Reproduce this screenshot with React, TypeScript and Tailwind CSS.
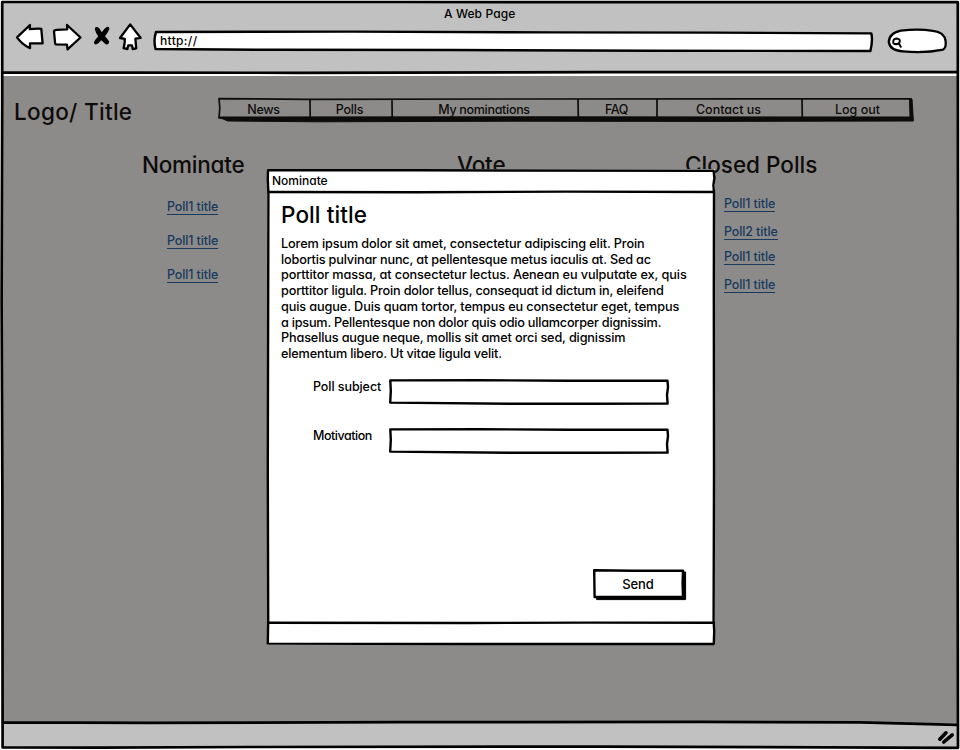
import type { ReactNode } from "react";

const FONT =
  "font-['Inter','Liberation_Sans',sans-serif] [font-feature-settings:'cv11','calt'_0]";

/* Hand-drawn outline stretched over the box that contains it. */
function Outline({
  w,
  h,
  d,
  stroke = 2.4,
  fill = "none",
  color = "#000",
}: {
  w: number;
  h: number;
  d: string;
  stroke?: number;
  fill?: string;
  color?: string;
}) {
  return (
    <svg
      className="pointer-events-none absolute inset-0 overflow-visible"
      width={w}
      height={h}
      viewBox={`0 0 ${w} ${h}`}
      fill={fill}
      stroke={color}
      strokeWidth={stroke}
      strokeLinejoin="round"
      strokeLinecap="round"
    >
      <path d={d} />
    </svg>
  );
}

function BrowserIcons() {
  return (
    <svg
      className="ml-[12px] mt-[18px] h-[32px] w-[130px] shrink-0"
      viewBox="14 20 130 32"
      fill="#fff"
      stroke="#000"
      strokeWidth="2.3"
      strokeLinejoin="round"
      strokeLinecap="round"
    >
      <path d="M17 37.4L30 25L29.8 29.2Q36 28.4 41.3 28.8L42.6 43.4L30 43.4L30 48.2Q22 44.5 17 37.4Z" />
      <path d="M54 31.5Q54.2 29.8 56.5 29.8L67.2 29.4L67 25L80.5 37.5L67.5 49.4L67 44.6L56.2 44.4Q55 44.2 55 42Z" />
      <path
        d="M95.4 27.2Q97.6 26.4 99.4 28.4L101.8 32.2Q104.4 28.4 107 26.8Q109.6 26.4 109.4 29.2Q107.6 32.8 105 36.2Q107.4 38.8 109.2 41.4Q109 44.6 106 44.4Q103.6 42.4 101.2 40.2Q98.6 43.6 96 44.6Q93.4 44.4 94.2 41.6Q95.6 38.8 98.2 36.4Q95.6 32.6 94.8 29.2Z"
        fill="#000"
        stroke="none"
      />
      <path d="M130.2 24.4L120 38L124.8 38.8Q125 44 123.6 48.2L127.4 49L128.2 45.4L132 45.4L132.7 49L136.2 48.4L135.4 38.6L140.6 37.8Q135.5 31.5 130.2 24.4Z" />
    </svg>
  );
}

const navItems = [
  { label: "News", cell: "w-[91px]", track: "tracking-[-0.3px]" },
  { label: "Polls", cell: "w-[81px]", track: "tracking-[-0.2px]" },
  { label: "My nominations", cell: "w-[188px]", track: "tracking-[-0.3px]" },
  { label: "FAQ", cell: "w-[77px]", track: "tracking-[-0.4px]" },
  { label: "Contact us", cell: "w-[147px]", track: "tracking-[0px]" },
  { label: "Log out", cell: "w-[111px]", track: "tracking-[0px]" },
];

function PollLink({ children, className = "" }: { children: ReactNode; className?: string }) {
  return (
    <a
      className={`block h-[15px] w-fit whitespace-pre border-b border-[#173a5e] text-[12.5px] leading-[14px] tracking-[-0.12px] text-[#173a5e] ${className}`}
    >
      {children}
    </a>
  );
}

const lines = [
  { text: "Lorem ipsum dolor sit amet, consectetur adipiscing elit. Proin", track: "tracking-[-0.12px]" },
  { text: "lobortis pulvinar nunc, at pellentesque metus iaculis at. Sed ac", track: "tracking-[-0.18px]" },
  { text: "porttitor massa, at consectetur lectus. Aenean eu vulputate ex, quis", track: "tracking-[-0.09px]" },
  { text: "porttitor ligula. Proin dolor tellus, consequat id dictum in, eleifend", track: "tracking-[-0.18px]" },
  { text: "quis augue. Duis quam tortor, tempus eu consectetur eget, tempus", track: "tracking-[-0.11px]" },
  { text: "a ipsum. Pellentesque non dolor quis odio ullamcorper dignissim.", track: "tracking-[-0.23px]" },
  { text: "Phasellus augue neque, mollis sit amet orci sed, dignissim", track: "tracking-[-0.15px]" },
  { text: "elementum libero. Ut vitae ligula velit.", track: "tracking-[-0.18px]" },
];

function Field({ label, className, track }: { label: string; className: string; track: string }) {
  return (
    <div className={`flex pl-[46px] ${className}`}>
      <label className={`w-[76px] whitespace-nowrap text-[12.5px] leading-[16px] ${track}`}>{label}</label>
      <div className="relative h-[26px] w-[280px]">
        <Outline w={280} h={26} d="M1.3 1.4L90 1.2L180 1.8L278.5 1.8L279 8L278 16L278.6 24.6L200 24.8L120 24.8L1.2 23.6L1.8 12Z" />
      </div>
    </div>
  );
}

function Dialog() {
  return (
    <div className="absolute left-[267px] top-[169px] flex h-[476px] w-[448px] flex-col bg-white text-black">
      <Outline
        w={448}
        h={476}
        d="M1 1.3L150 1.2L250 1.5L446.6 1.7L447.4 9L446.4 16L447 24L446.8 120L447 300L446.6 452L447.2 462L446.8 475L200 475L.8 474.6L1.2 452L.8 300L1.2 120L1.4 24L.8 10Z"
      />
      <div className="relative h-[23px] pl-[5px] pt-[4px]">
        <h2 className="text-[12px] leading-[16px] tracking-[0px]">Nominate</h2>
        <Outline w={448} h={23} d="M1.2 23L150 23.2L300 22.6L447 23" />
      </div>
      <div className="h-[430px] pl-[14px]">
        <h3 className="mt-[9px] whitespace-pre text-[22.5px] leading-[28px] tracking-[0.1px]">Poll title</h3>
        <div className="mt-[7px] text-[12.7px] leading-[15.7px]">
          {lines.map((l) => (
            <p key={l.text} className={`whitespace-nowrap ${l.track}`}>
              {l.text}
            </p>
          ))}
        </div>
        <div className="-ml-[14px]">
          <Field label="Poll subject" className="mt-[17.4px]" track="tracking-[-0.07px]" />
          <Field label="Motivation" className="mt-[23px]" track="tracking-[-0.46px]" />
        </div>
        <button className="relative ml-[312px] mt-[115px] flex h-[32px] w-[93px] pt-[7px]">
          <Outline w={93} h={32} fill="#000" stroke={1} d="M4 28L90 28L90 3L92.6 3L92.6 30.6L4 30.6Z" />
          <Outline w={93} h={32} d="M1.2 1.3L40 1.8L90 1.6L89.6 14L90 27.7L40 28L1.6 28Z" />
          <span className="w-[90px] text-center text-[13px] leading-[16px] tracking-[-0.1px]">Send</span>
        </button>
      </div>
      <div className="relative h-[23px]">
        <Outline w={448} h={23} d="M1.2 .8L200 1L320 .6L447 .8" />
      </div>
    </div>
  );
}

const HEADING = "mt-px whitespace-nowrap text-[22.5px] leading-[26px]";

export default function App() {
  return (
    <div className={`relative flex h-[750px] w-[960px] flex-col overflow-hidden bg-white font-[450] text-black ${FONT}`}>
      <header className="mx-[2px] mt-[2px] flex h-[71px] bg-[#c1c1c1]">
        <div className="flex w-full">
          <BrowserIcons />
          <div className="relative ml-[8px] mt-[28px] h-[23px] w-[722px] shrink-0">
            <Outline
              w={722}
              h={23}
              fill="#fff"
              d="M4 2L200 1.6L400 2.4L560 2.6L719.3 3.4Q721 10 718.4 21L500 20.8L300 20L120 19.8L3.5 19Q1.3 10 4 2Z"
            />
            <span className="relative block pl-[8px] pt-[3px] text-[12px] leading-[16px] tracking-[0.35px]">http://</span>
            <span className="absolute left-[292px] top-[-24px] whitespace-nowrap text-[12px] leading-[16px] tracking-[0.1px]">
              A Web Page
            </span>
          </div>
          <svg
            className="ml-[12px] mt-[24px] h-[30px] w-[64px]"
            viewBox="886 26 64 30"
            fill="#fff"
            stroke="#000"
            strokeWidth="2.3"
            strokeLinecap="round"
            strokeLinejoin="round"
          >
            <path d="M888.8 42Q889 33 901 30.6Q918 28.4 933 30.8Q944.5 32 945.6 41Q946.4 48 943 49.6Q925 53.4 903 51.4Q890 50.5 888.8 42Z" />
            <path
              d="M893.4 43.4Q892.4 38.6 896.8 38.4Q901 39 899.4 42.6Q897 45.2 893.4 43.4M898.8 43.6L900.8 46.8"
              strokeWidth="2"
            />
          </svg>
        </div>
      </header>

      <main className="mx-[2px] mt-[3px] h-[647px] bg-[#8d8b89] text-[#0d0c0b]">
        <div className="flex">
          <h1 className="ml-[12px] mt-[22px] w-[204px] whitespace-pre text-[22.5px] leading-[28px] tracking-[0.3px]">
            Logo/ Title
          </h1>
          <nav className="relative mt-[22px] flex h-[24px] w-[696px] pt-[4px]">
            <Outline
              w={696}
              h={24}
              stroke={1}
              color="#0d0c0b"
              fill="#0d0c0b"
              d="M1 19L300 18.8L692 19L691.5 1L694 1L695.4 23L500 23.4L300 23.2L100 23.8L10 23Z"
            />
            <Outline
              w={696}
              h={24}
              stroke={1.7}
              color="#0d0c0b"
              d="M1 .6L90 1.4L300 1L693 .8L693.2 20L1 20L1.8 10ZM92 1L92.2 20M174 1L174.2 20M360 1L360.3 20M439 1L439 20M584 1L584.3 20"
            />
            {navItems.map((n) => (
              <a key={n.label} className={`block text-center text-[12.5px] leading-[16px] ${n.cell} ${n.track}`}>
                {n.label}
              </a>
            ))}
          </nav>
        </div>

        <div className="mt-[25px] flex">
          <section className="ml-[140px] w-[315px]">
            <h2 className={`${HEADING} tracking-[-0.25px]`}>Nominate</h2>
            <div className="ml-[25px] mt-[22px] flex flex-col gap-[19px]">
              <PollLink>Poll1 title</PollLink>
              <PollLink>Poll1 title</PollLink>
              <PollLink>Poll1 title</PollLink>
            </div>
          </section>
          <section className="w-[228px]">
            <h2 className={`${HEADING} tracking-[-0.1px]`}>Vote</h2>
          </section>
          <section>
            <h2 className={`${HEADING} tracking-[0px]`}>Closed Polls</h2>
            <div className="ml-[39px] mt-[19px]">
              <PollLink>Poll1 title</PollLink>
              <PollLink className="mt-[13px]">Poll2 title</PollLink>
              <PollLink className="mt-[10px]">Poll1 title</PollLink>
              <PollLink className="mt-[13px]">Poll1 title</PollLink>
            </div>
          </section>
        </div>
      </main>

      <footer className="mx-[2px] flex h-[24px] justify-end bg-[#c1c1c1]">
        <svg
          className="mr-[2px] mt-[6px] h-[16px] w-[20px]"
          viewBox="936 729 20 16"
          stroke="#000"
          strokeWidth="3.6"
          strokeLinecap="round"
        >
          <path d="M939.8 739.2L946 732.8M943.8 742L952.2 734.8" />
        </svg>
      </footer>

      <Outline
        w={960}
        h={750}
        stroke={2.7}
        d="M2.2 2L400 2L957.8 2.2L958 300L957.6 500L958 747.8L600 746.6L250 747L100 747.6L2.6 747.4L2.4 500L1.6 300L2.2 100ZM2.5 72.4L300 72.8L600 72.2L957.5 72.2M2.5 722.4L150 722.8L400 722.2L700 721.8L860 722.4L957.5 724.8"
      />
      <Dialog />
    </div>
  );
}
